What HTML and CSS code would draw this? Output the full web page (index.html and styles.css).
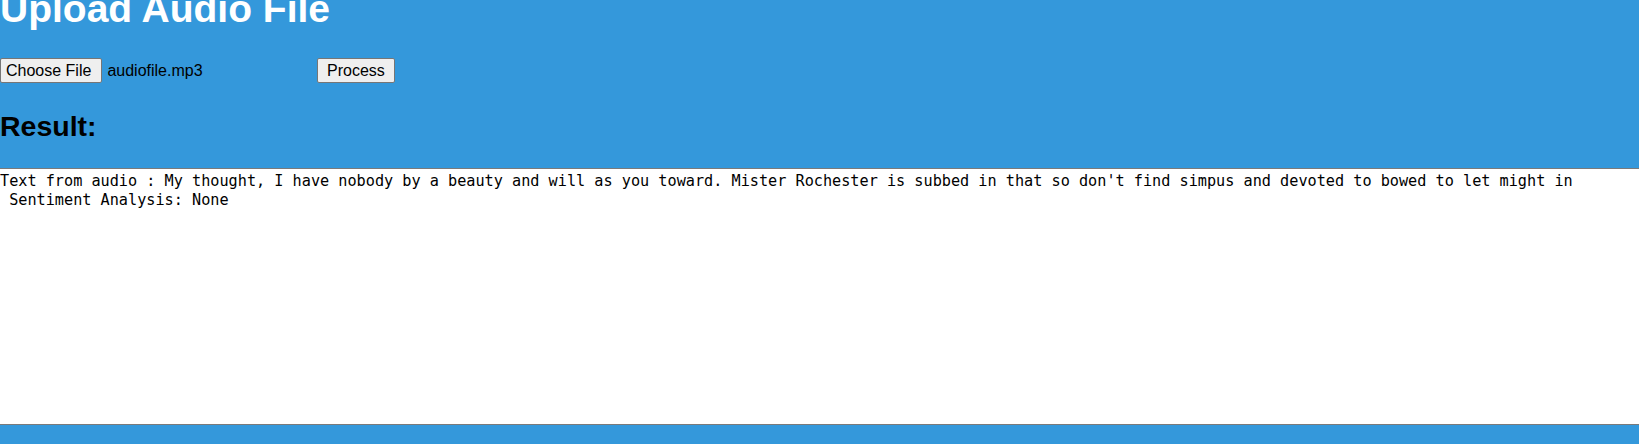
FILE: index.html
```html
<!DOCTYPE html>
<html lang="en">
<head>
<meta charset="utf-8">
<title>Upload Audio File</title>
<link rel="stylesheet" href="styles.css">
</head>
<body>
<header class="top">
  <h1 class="title">Upload Audio File</h1>
  <form class="upload-row">
    <span class="file-input">
      <button type="button" class="btn btn-file">Choose File</button>
      <span class="file-name">audiofile.mp3</span>
    </span>
    <button type="button" class="btn">Process</button>
  </form>
  <h2 class="subtitle">Result:</h2>
</header>
<main class="result">
<pre class="result-text">Text from audio : My thought, I have nobody by a beauty and will as you toward. Mister Rochester is subbed in that so don't find simpus and devoted to bowed to let might in
 Sentiment Analysis: None</pre>
</main>
<footer class="bottom"></footer>
</body>
</html>
```

FILE: styles.css
```css
html, body {
  margin: 0;
  padding: 0;
  background: #ffffff;
  overflow: hidden;
}

body {
  font-family: "Liberation Sans", Arial, sans-serif;
  color: #000;
}

.top {
  background: #3498db;
  border-bottom: 1px solid #7a7a7a;
  height: 168px;
  box-sizing: content-box;
  display: flex;
  flex-direction: column;
  overflow: hidden;
}

.title {
  margin: -13px 0 0 0;
  font-size: 39px;
  line-height: 44px;
  font-weight: bold;
  color: #ffffff;
  white-space: nowrap;
}

.upload-row {
  margin: 27px 0 0 0;
  display: flex;
  align-items: center;
  gap: 5px;
  height: 25px;
}

.file-input {
  display: flex;
  align-items: center;
  width: 312px;
  gap: 5px;
}

.btn {
  font-family: "Liberation Sans", Arial, sans-serif;
  font-size: 16px;
  height: 25px;
  padding: 0 9px;
  background: #efefef;
  color: #000;
  border: 1px solid #767676;
  border-radius: 2px;
  line-height: 20px;
}

.btn-file {
  padding: 0 10px 0 5px;
}

.file-name {
  font-size: 16px;
  color: #000;
}

.subtitle {
  margin: 27px 0 0 0;
  font-size: 28.5px;
  line-height: 33px;
  font-weight: bold;
  color: #000;
}

.result {
  height: 255px;
  overflow: hidden;
}

.result-text {
  margin: 3px 0 0 0;
  font-family: "DejaVu Sans Mono", "Liberation Mono", monospace;
  font-size: 15.2px;
  line-height: 19px;
  color: #000;
  white-space: pre;
}

.bottom {
  background: #3498db;
  border-top: 1px solid #7a7a7a;
  height: 40px;
}
```
